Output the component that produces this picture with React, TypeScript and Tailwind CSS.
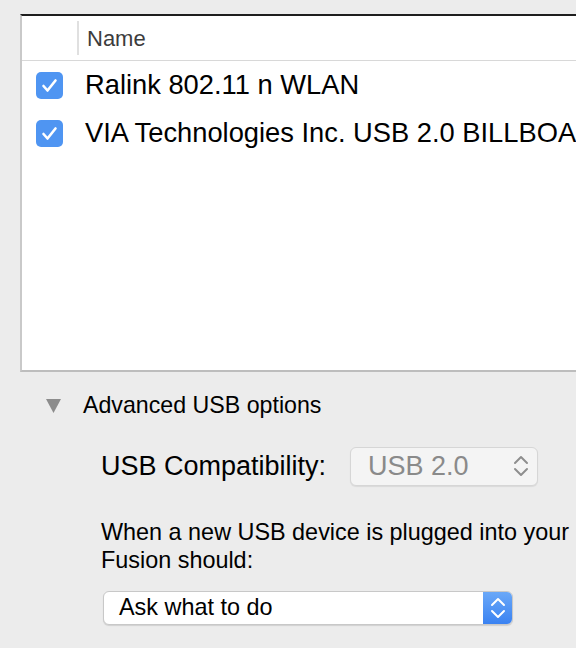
import React from "react"

const font = { fontFamily: '"Liberation Sans", Arial, sans-serif' }

const Check = () => (
  <div className="w-[27px] h-[27px] rounded-[5px] bg-[#4f95f2] flex items-center justify-center shrink-0">
    <svg width="17" height="15" viewBox="0 0 17 15" fill="none">
      <path d="M2.5 8 L6.5 12.5 L14.5 2.5" stroke="white" strokeWidth="2.6" strokeLinecap="round" strokeLinejoin="round" />
    </svg>
  </div>
)

const Chevrons = ({ color }: { color: string }) => (
  <svg width="16" height="26" viewBox="0 0 16 26" fill="none">
    <path d="M2 10 L8 4 L14 10" stroke={color} strokeWidth="2" strokeLinecap="round" strokeLinejoin="round" />
    <path d="M2 16 L8 22 L14 16" stroke={color} strokeWidth="2" strokeLinecap="round" strokeLinejoin="round" />
  </svg>
)

const devices = ["Ralink 802.11 n WLAN", "VIA Technologies Inc. USB 2.0 BILLBOARD Device"]

export default function App() {
  return (
    <div className="w-[576px] h-[648px] bg-[#ececec] overflow-hidden text-black" style={font}>
      {/* Device table */}
      <div className="mt-[14px] ml-[20px] w-[600px] h-[358px] bg-white border-t-2 border-t-[#1e1e1e] border-l-2 border-l-[#c9c9c9] border-b-2 border-b-[#bdbdbd] flex flex-col">
        <div className="h-[45px] flex items-center border-b border-[#d8d8d8] shrink-0">
          <div className="w-[55px]" />
          <div className="w-[2px] h-[34px] bg-[#e0e0e0]" />
          <span className="ml-[8px] text-[22px] text-[#3c3c3c]">Name</span>
        </div>
        <div className="flex flex-col">
          {devices.map((d) => (
            <div key={d} className="h-[48px] flex items-center whitespace-nowrap">
              <div className="ml-[14px]">
                <Check />
              </div>
              <span className="ml-[22px] text-[27.3px] leading-none">{d}</span>
            </div>
          ))}
        </div>
      </div>

      {/* Advanced options */}
      <div className="mt-[22px] ml-[46px] flex items-center h-[22px]">
        <svg width="15" height="15" viewBox="0 0 15 15">
          <polygon points="0,1 15,1 7.5,15" fill="#8c8c8c" />
        </svg>
        <span className="ml-[22px] text-[23.2px]">Advanced USB options</span>
      </div>

      <div className="ml-[101px] mt-[30px] flex items-center">
        <span className="text-[27px] w-[249px]">USB Compatibility:</span>
        <div className="w-[188px] h-[39px] rounded-[6px] border border-[#d6d6d6] bg-[#f4f4f4] flex items-center justify-between pl-[17px] pr-[8px] shadow-[0_1px_1px_rgba(0,0,0,0.08)]">
          <span className="text-[27px] text-[#8a8a8a]">USB 2.0</span>
          <Chevrons color="#8e8e8e" />
        </div>
      </div>

      <div className="ml-[101px] mt-[31px] text-[23.4px] leading-[28px] whitespace-nowrap">
        <div>When a new USB device is plugged into your</div>
        <div>Fusion should:</div>
      </div>

      <div className="ml-[103px] mt-[17px] w-[410px] h-[34px] rounded-[6px] border border-[#c8c8c8] bg-white flex items-stretch overflow-hidden shadow-[0_1px_1px_rgba(0,0,0,0.12)]">
        <div className="flex-1 flex items-center pl-[15px] text-[23.4px]">Ask what to do</div>
        <div className="w-[29px] bg-gradient-to-b from-[#6aa8f8] to-[#3a82f1] flex items-center justify-center">
          <Chevrons color="white" />
        </div>
      </div>
    </div>
  )
}
